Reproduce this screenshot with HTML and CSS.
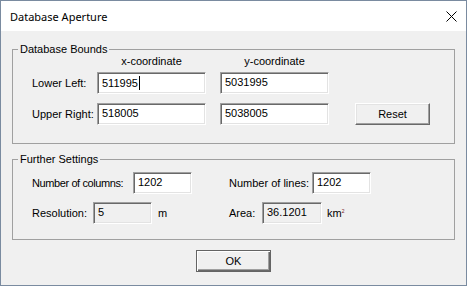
FILE: index.html
```html
<!DOCTYPE html>
<html lang="en">
<head>
    <meta charset="UTF-8">
    <title>Database Aperture</title>
    <link rel="stylesheet" href="styles.css">
</head>
<body>
    <div class="window">
        <div class="titlebar">
            <span class="title">Database Aperture</span>
            <svg class="close" width="11" height="11" viewBox="0 0 11 11">
                <path d="M0.5 0.5 L10.5 10.5 M10.5 0.5 L0.5 10.5" stroke="#000" stroke-width="1" fill="none"/>
            </svg>
        </div>
        <div class="dialog">
            <fieldset class="group">
                <legend>Database Bounds</legend>
                <div class="group-body bounds">
                    <div class="axes">
                        <span class="axis">x-coordinate</span>
                        <span class="axis">y-coordinate</span>
                    </div>
                    <div class="bounds-grid">
                        <label>Lower Left:</label>
                        <div class="field wide">511995<span class="caret"></span></div>
                        <div class="field wide">5031995</div>
                        <span></span>
                        <label>Upper Right:</label>
                        <div class="field wide">518005</div>
                        <div class="field wide">5038005</div>
                        <button type="button" class="btn">Reset</button>
                    </div>
                </div>
            </fieldset>

            <fieldset class="group second">
                <legend>Further Settings</legend>
                <div class="group-body settings">
                    <div class="set-row">
                        <div class="cell first">
                            <label class="l-cols">Number of columns:</label>
                            <div class="field short">1202</div>
                        </div>
                        <div class="cell">
                            <label class="l-lines">Number of lines:</label>
                            <div class="field short">1202</div>
                        </div>
                    </div>
                    <div class="set-row">
                        <div class="cell first">
                            <label class="l-res">Resolution:</label>
                            <div class="field short readonly">5</div>
                            <span class="unit">m</span>
                        </div>
                        <div class="cell">
                            <label class="l-area">Area:</label>
                            <div class="field area readonly">36.1201</div>
                            <span class="unit km">km<sup>2</sup></span>
                        </div>
                    </div>
                </div>
            </fieldset>

            <div class="actions">
                <button type="button" class="btn default">OK</button>
            </div>
        </div>
    </div>
</body>
</html>
```

FILE: styles.css
```css
/* dialog window */
body {
    margin: 0;
    padding: 0;
    font-family: "Liberation Sans", Arial, sans-serif;
    font-size: 11px;
    line-height: 13px;
    color: #000;
    background-color: #f0f0f0;
}
.window {
    width: 467px;
    height: 286px;
    box-sizing: border-box;
    border: 1px solid #7a8ba0;
    background-color: #f0f0f0;
}
.titlebar {
    height: 30px;
    display: flex;
    align-items: center;
    justify-content: space-between;
    padding: 0 9px 0 9px;
    background-color: #fff;
}
.title {
    font-family: "Noto Sans", sans-serif;
    font-size: 11px;
    margin-top: 1px;
}
.close {
    display: block;
    margin-top: 1px;
}
.dialog {
    padding: 12px 11px 0 11px;
}

/* group boxes */
.group {
    margin: 0;
    padding: 0;
    border: 1px solid #a0a0a0;
    min-width: 0;
}
.group legend {
    margin-left: 5px;
    padding: 0 2px;
    line-height: 13px;
}
.second {
    margin-top: 9px;
}
.group-body {
    padding-left: 19px;
}
.bounds {
    padding-bottom: 18px;
}
.axes {
    display: flex;
    gap: 14px;
    padding-left: 65px;
    margin-top: -1px;
    margin-bottom: 4px;
}
.axis {
    width: 109px;
    text-align: center;
}
.bounds-grid {
    display: grid;
    grid-template-columns: 65px 123px 135px 75px;
    grid-template-rows: 22px 22px;
    row-gap: 9px;
    align-items: center;
}
.settings {
    display: grid;
    row-gap: 8px;
    padding-top: 6px;
    padding-bottom: 15px;
}
.set-row {
    display: flex;
}
.cell {
    display: flex;
    align-items: center;
}
.cell.first {
    width: 197px;
}
.l-cols { width: 101px; letter-spacing: -0.4px; }
.l-lines { width: 83px; }
.l-res { width: 61px; }
.l-area { width: 33px; }

/* sunken text fields */
.field {
    box-sizing: border-box;
    height: 22px;
    padding: 3px 4px 0 4px;
    background-color: #fff;
    border-style: solid;
    border-width: 1px;
    border-color: #a0a0a0 #fff #fff #a0a0a0;
    box-shadow: inset 1px 1px #696969, inset -1px -1px #e3e3e3;
    white-space: nowrap;
}
.field.wide { width: 109px; }
.field.short { width: 59px; }
.field.area { width: 60px; }
.field.readonly {
    background-color: #f0f0f0;
}
.caret {
    display: inline-block;
    width: 1px;
    height: 14px;
    margin-left: 1px;
    background-color: #000;
    vertical-align: -3px;
}
.unit {
    margin-left: 6px;
}
.unit.km {
    margin-left: 5px;
}
.unit sup {
    font-size: 5px;
    color: #7a2020;
    vertical-align: 4px;
    line-height: 0;
}

/* buttons */
.btn {
    box-sizing: border-box;
    width: 75px;
    height: 22px;
    padding: 0;
    font-family: "Liberation Sans", Arial, sans-serif;
    font-size: 11px;
    color: #000;
    background-color: #f0f0f0;
    border-style: solid;
    border-width: 1px;
    border-color: #fff #696969 #696969 #fff;
    box-shadow: inset -1px -1px #a0a0a0, inset 1px 1px #e3e3e3;
}
.btn.default {
    border-color: #646464;
    box-shadow: inset 1px 1px #fff, inset -1px -1px #696969, inset -2px -2px #a0a0a0;
}
.actions {
    display: flex;
    justify-content: center;
    padding-top: 10px;
}
```
